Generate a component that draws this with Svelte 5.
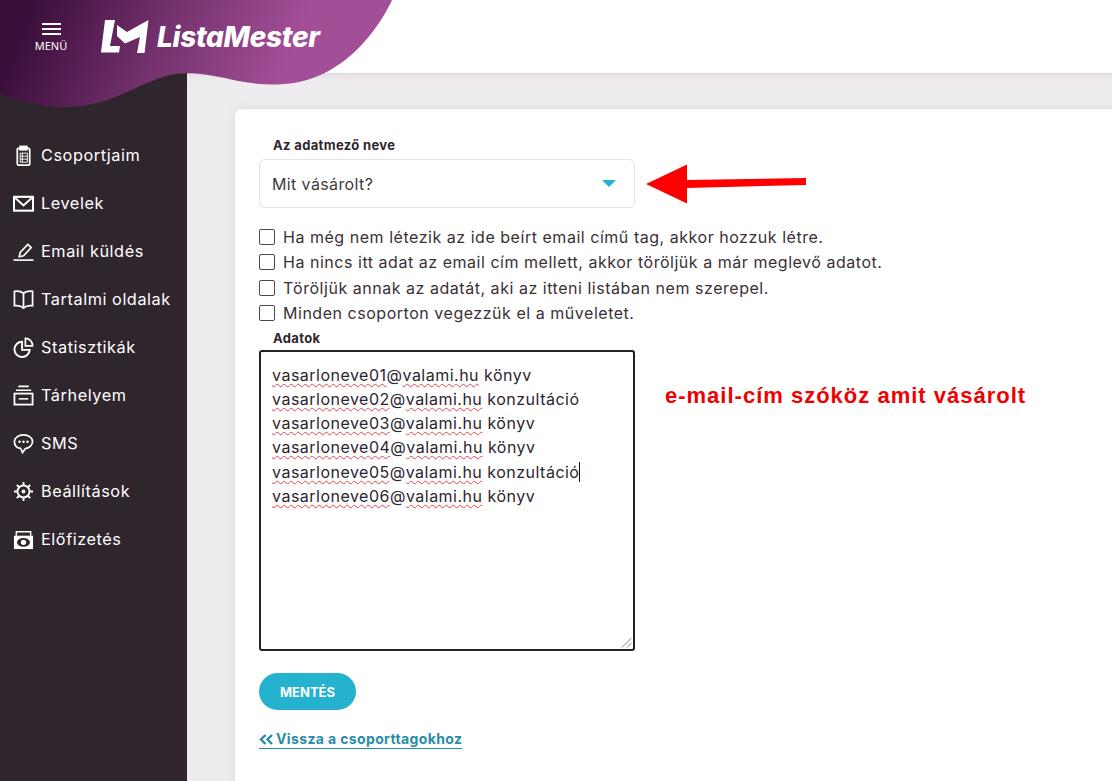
<script lang="ts">
  const menu = [
    { label: 'Csoportjaim', icon: 'clip' },
    { label: 'Levelek', icon: 'mail' },
    { label: 'Email küldés', icon: 'pen' },
    { label: 'Tartalmi oldalak', icon: 'book' },
    { label: 'Statisztikák', icon: 'pie' },
    { label: 'Tárhelyem', icon: 'box' },
    { label: 'SMS', icon: 'chat' },
    { label: 'Beállítások', icon: 'gear' },
    { label: 'Előfizetés', icon: 'cash' }
  ];

  const checks = [
    'Ha még nem létezik az ide beírt email című tag, akkor hozzuk létre.',
    'Ha nincs itt adat az email cím mellett, akkor töröljük a már meglevő adatot.',
    'Töröljük annak az adatát, aki az itteni listában nem szerepel.',
    'Minden csoporton vegezzük el a műveletet.'
  ];

  const rows = [
    ['vasarloneve01', 'valami.hu', 'könyv'],
    ['vasarloneve02', 'valami.hu', 'konzultáció'],
    ['vasarloneve03', 'valami.hu', 'könyv'],
    ['vasarloneve04', 'valami.hu', 'könyv'],
    ['vasarloneve05', 'valami.hu', 'konzultáció'],
    ['vasarloneve06', 'valami.hu', 'könyv']
  ];
</script>

<div class="page">
  <aside class="sidebar">
    <nav>
      {#each menu as item}
        <a class="nav-item" href="#top">
          <svg class="nav-icon" viewBox="0 0 22 22" fill="none" stroke="currentColor" stroke-width="1.8">
            {#if item.icon === 'clip'}
              <rect x="4.5" y="3.5" width="13" height="17.500" rx="1" />
              <rect x="7.5" y="1.5" width="7" height="3.5" fill="currentColor" />
              <path d="M7.500 8.500h7.500v9.500H7.500zM7.500 11.700h7.500M7.500 14.800h7.500M9.800 8.500v9.500" stroke-width="1" />
            {:else if item.icon === 'mail'}
              <rect x="1" y="4" width="20" height="14.500" stroke-width="2.200" />
              <path d="M1.500 4.500l9.500 8.500 9.500-8.500" stroke-width="2" />
            {:else if item.icon === 'pen'}
              <path d="M0.500 20h21" stroke-width="1.700" />
              <path d="M6.500 16.500l1-4.500 8-8.500 3.600 3.400-8 8.600z" stroke-width="1.700" />
            {:else if item.icon === 'book'}
              <path d="M11 4.500C8.500 2.500 5 2 1.500 2.500v15c3.500-.5 7 0 9.500 2.500 2.500-2.500 6-3 9.500-2.500v-15C17 2 13.500 2.500 11 4.500zM11 4.500V20" />
            {:else if item.icon === 'pie'}
              <path d="M9.500 5a8 8 0 1 0 8 8.500H9.500z" stroke-width="2" />
              <path d="M13 1.500a7.500 7.500 0 0 1 7.500 7.800H13z" stroke-width="1.800" />
            {:else if item.icon === 'box'}
              <path d="M5.500 1.500h11M3 5.500h16" stroke-width="1.700" />
              <rect x="1.500" y="9" width="19" height="11.500" stroke-width="1.900" />
              <path d="M6 14.500h10" stroke-width="1.600" />
            {:else if item.icon === 'chat'}
              <path d="M11 2c5.500 0 9.500 3 9.500 7 0 4-4 7-7.500 7.300L10 20.500 8 16.200C4 15.700 1.500 13 1.500 9c0-4 4-7 9.500-7z" stroke-width="1.800" />
              <circle cx="6.800" cy="9.200" r="1.300" fill="currentColor" stroke="none" />
              <circle cx="11" cy="9.200" r="1.300" fill="currentColor" stroke="none" />
              <circle cx="15.200" cy="9.200" r="1.300" fill="currentColor" stroke="none" />
            {:else if item.icon === 'gear'}
              <circle cx="11" cy="11" r="6.300" stroke-width="1.900" />
              <circle cx="11" cy="11" r="2" fill="currentColor" stroke="none" />
              <path d="M11 1v3.500M11 17.500V21M1 11h3.500M17.500 11H21M4 4l2.500 2.500M15.500 15.500L18 18M18 4l-2.500 2.500M6.500 15.500L4 18" stroke-width="2" />
            {:else}
              <path d="M3.500 2.800h15M3.500 2v5M18.500 2v5" stroke-width="1.500" />
              <rect x="1" y="7" width="20" height="14" fill="currentColor" stroke="none" />
              <ellipse cx="11" cy="14" rx="6.800" ry="4.500" fill="#2f252d" stroke="none" />
              <circle cx="11" cy="14" r="2.800" fill="currentColor" stroke="none" />
            {/if}
          </svg>
          <span>{item.label}</span>
        </a>
      {/each}
    </nav>
  </aside>

  <div class="content">
    <header class="topbar"></header>
    <main class="main">
      <section class="card">
        <label class="field-label" for="field">Az adatmező neve</label>
        <div class="select-row">
          <div class="select" id="field">
            <span>Mit vásárolt?</span>
            <i class="caret"></i>
          </div>
          <svg class="arrow" width="162" height="42" viewBox="0 0 162 42">
            <path d="M1 21L42 1.500v15.500l119-2v7l-119 3v15.500z" fill="#ff0000" />
          </svg>
        </div>

        <div class="checks">
          {#each checks as text}
            <div class="check">
              <i class="box"></i>
              <span>{text}</span>
            </div>
          {/each}
        </div>

        <div class="field-label data-label">Adatok</div>
        <div class="data-row">
          <div class="textarea">
            {#each rows as row, i}
              <div class="line"><span class="typo">{row[0]}</span>@<span class="typo">{row[1]}</span> {row[2]}{#if i === 4}<i class="cursor"></i>{/if}</div>
            {/each}
            <svg class="grip" width="11" height="11" viewBox="0 0 11 11" stroke="#8a8a8a" stroke-width="1">
              <path d="M1 10.500L10.500 1M6 10.500l4.500-4.500" />
            </svg>
          </div>
          <p class="note">e-mail-cím szóköz amit vásárolt</p>
        </div>

        <button class="save" type="button">MENTÉS</button>
        <a class="back" href="#top">
          <svg width="14" height="11" viewBox="0 0 14 11" fill="none" stroke="currentColor" stroke-width="2.400">
            <path d="M6.500 1L2 5.500 6.500 10M13 1L8.500 5.500 13 10" />
          </svg>
          Vissza a csoporttagokhoz
        </a>
      </section>
    </main>
  </div>

  <svg class="blob" width="393" height="108" viewBox="0 0 393 108">
    <defs>
      <linearGradient id="blobFill" gradientUnits="userSpaceOnUse" x1="25" y1="30" x2="265" y2="125">
        <stop offset="0" stop-color="#3c0f3b" />
        <stop offset="0.5" stop-color="#73316d" />
        <stop offset="1" stop-color="#a34f98" />
      </linearGradient>
    </defs>
    <path d="M0 0H392C378 30 352 62 318 76C285 90 250 84 225 78C205 74 190 72 175 74C140 80 115 107 65 107C40 107 18 100 0 94Z" fill="url(#blobFill)" />
  </svg>

  <div class="brand">
    <button class="burger" type="button">
      <span class="bars"><i></i><i></i><i></i></span>
      <span class="burger-text">MENÜ</span>
    </button>
    <svg class="logo" width="48" height="33" viewBox="0 0 48 33" fill="#fff">
      <path d="M4 0h10L9 26h10l-1 6.500H0z" />
      <path d="M16 5l10 7L47.500 0l-4 33h-7.500l3-16-15 6.500L16 16z" />
    </svg>
    <span class="wordmark">ListaMester</span>
  </div>
</div>

<style>
  :global(body) {
    margin: 0;
    font-family: "Inter", "Noto Sans", sans-serif;
  }

  .page {
    position: relative;
    display: flex;
    height: 781px;
    width: 1112px;
    overflow: hidden;
    background: #efecef;
  }

  .sidebar {
    flex: 0 0 187px;
    background: #2f252d;
    padding-top: 131px;
    box-sizing: border-box;
  }

  .nav-item {
    display: flex;
    align-items: center;
    gap: 7px;
    height: 48px;
    padding-left: 13px;
    color: #fff;
    font-size: 16.3px;
    letter-spacing: 0.55px;
    text-decoration: none;
  }

  .nav-icon {
    flex: 0 0 21px;
    width: 21px;
    height: 21px;
  }

  .content {
    flex: 1;
    min-width: 0;
  }

  .topbar {
    height: 73px;
    background: #fff;
    border-bottom: 1px solid #dcdadc;
    box-shadow: 0 2px 6px rgba(60, 40, 60, 0.08);
  }

  .main {
    padding: 35px 0 0 48px;
  }

  .card {
    width: 1000px;
    height: 700px;
    box-sizing: border-box;
    background: #fff;
    border-radius: 7px 0 0 0;
    padding: 28px 0 0 24px;
    box-shadow: 0 0 10px rgba(60, 40, 60, 0.1);
    color: #2f252d;
  }

  .field-label {
    display: block;
    margin-left: 14px;
    font-size: 13px;
    line-height: 16px;
    font-weight: 700;
    letter-spacing: 0.35px;
  }

  .select-row {
    display: flex;
    align-items: center;
    gap: 10px;
    margin-top: 6px;
  }

  .select {
    display: flex;
    align-items: center;
    justify-content: space-between;
    box-sizing: border-box;
    width: 376px;
    height: 49px;
    padding: 0 18px 0 12px;
    border: 1px solid #e6e4e6;
    border-radius: 6px;
    font-size: 16px;
    letter-spacing: 0.38px;
    color: #3e3a40;
  }

  .caret {
    width: 0;
    height: 0;
    border-left: 7px solid transparent;
    border-right: 7px solid transparent;
    border-top: 7px solid #25b2cf;
  }

  .checks {
    margin-top: 16.5px;
  }

  .check {
    display: flex;
    align-items: center;
    gap: 8px;
    height: 25.3px;
    font-size: 16px;
    letter-spacing: 0.53px;
    color: #3a3036;
  }

  .box {
    flex: 0 0 16px;
    box-sizing: border-box;
    width: 16px;
    height: 16px;
    border: 1.3px solid #4a4a4a;
    border-radius: 2px;
  }

  .data-label {
    margin-top: 4.5px;
  }

  .data-row {
    display: flex;
    align-items: center;
    margin-top: 4px;
    gap: 30px;
  }

  .textarea {
    position: relative;
    box-sizing: border-box;
    width: 376px;
    height: 301px;
    padding: 11px 11px;
    border: 2px solid #222;
    border-radius: 3px;
    font-size: 16px;
    letter-spacing: 0.49px;
    line-height: 24.1px;
    color: #2c2530;
    white-space: nowrap;
  }

  .typo {
    text-decoration: underline wavy #e8434a 1px;
    text-underline-offset: 2px;
  }

  .cursor {
    display: inline-block;
    width: 1px;
    height: 20px;
    background: #111;
    vertical-align: -4px;
  }

  .grip {
    position: absolute;
    right: 1px;
    bottom: 1px;
  }

  .note {
    margin: 0 0 210px;
    color: #f00000;
    font-family: "Liberation Sans", sans-serif;
    font-weight: 700;
    font-size: 22px;
    letter-spacing: 1px;
    white-space: nowrap;
  }

  .save {
    display: block;
    width: 97px;
    height: 37px;
    margin-top: 22px;
    border: 0;
    border-radius: 19px;
    background: #25b2cf;
    color: #fff;
    font: 700 13px "Inter", sans-serif;
  }

  .back {
    display: inline-flex;
    align-items: center;
    gap: 3px;
    margin-top: 20px;
    color: #2b8ca6;
    font-size: 14px;
    font-weight: 700;
    letter-spacing: 0.37px;
    line-height: 18px;
    text-decoration: none;
    border-bottom: 1px solid #2b8ca6;
  }

  .blob {
    position: absolute;
    left: 0;
    top: 0;
  }

  .brand {
    position: absolute;
    left: 34px;
    top: 18px;
    display: flex;
    align-items: center;
  }

  .burger {
    display: flex;
    flex-direction: column;
    align-items: center;
    gap: 4px;
    width: 34px;
    padding: 2px 0 0;
    background: none;
    border: 0;
    color: #fff;
    font: 11px "Noto Sans", sans-serif;
  }

  .bars {
    display: flex;
    flex-direction: column;
    gap: 3px;
  }

  .bars i {
    display: block;
    width: 19px;
    height: 2px;
    background: #fff;
  }

  .burger-text {
    line-height: 13px;
  }

  .logo {
    margin-left: 33px;
  }

  .wordmark {
    margin: 2px 0 0 8px;
    color: #fff;
    font-size: 28px;
    font-weight: 800;
    font-style: italic;
    letter-spacing: -0.3px;
  }
</style>
